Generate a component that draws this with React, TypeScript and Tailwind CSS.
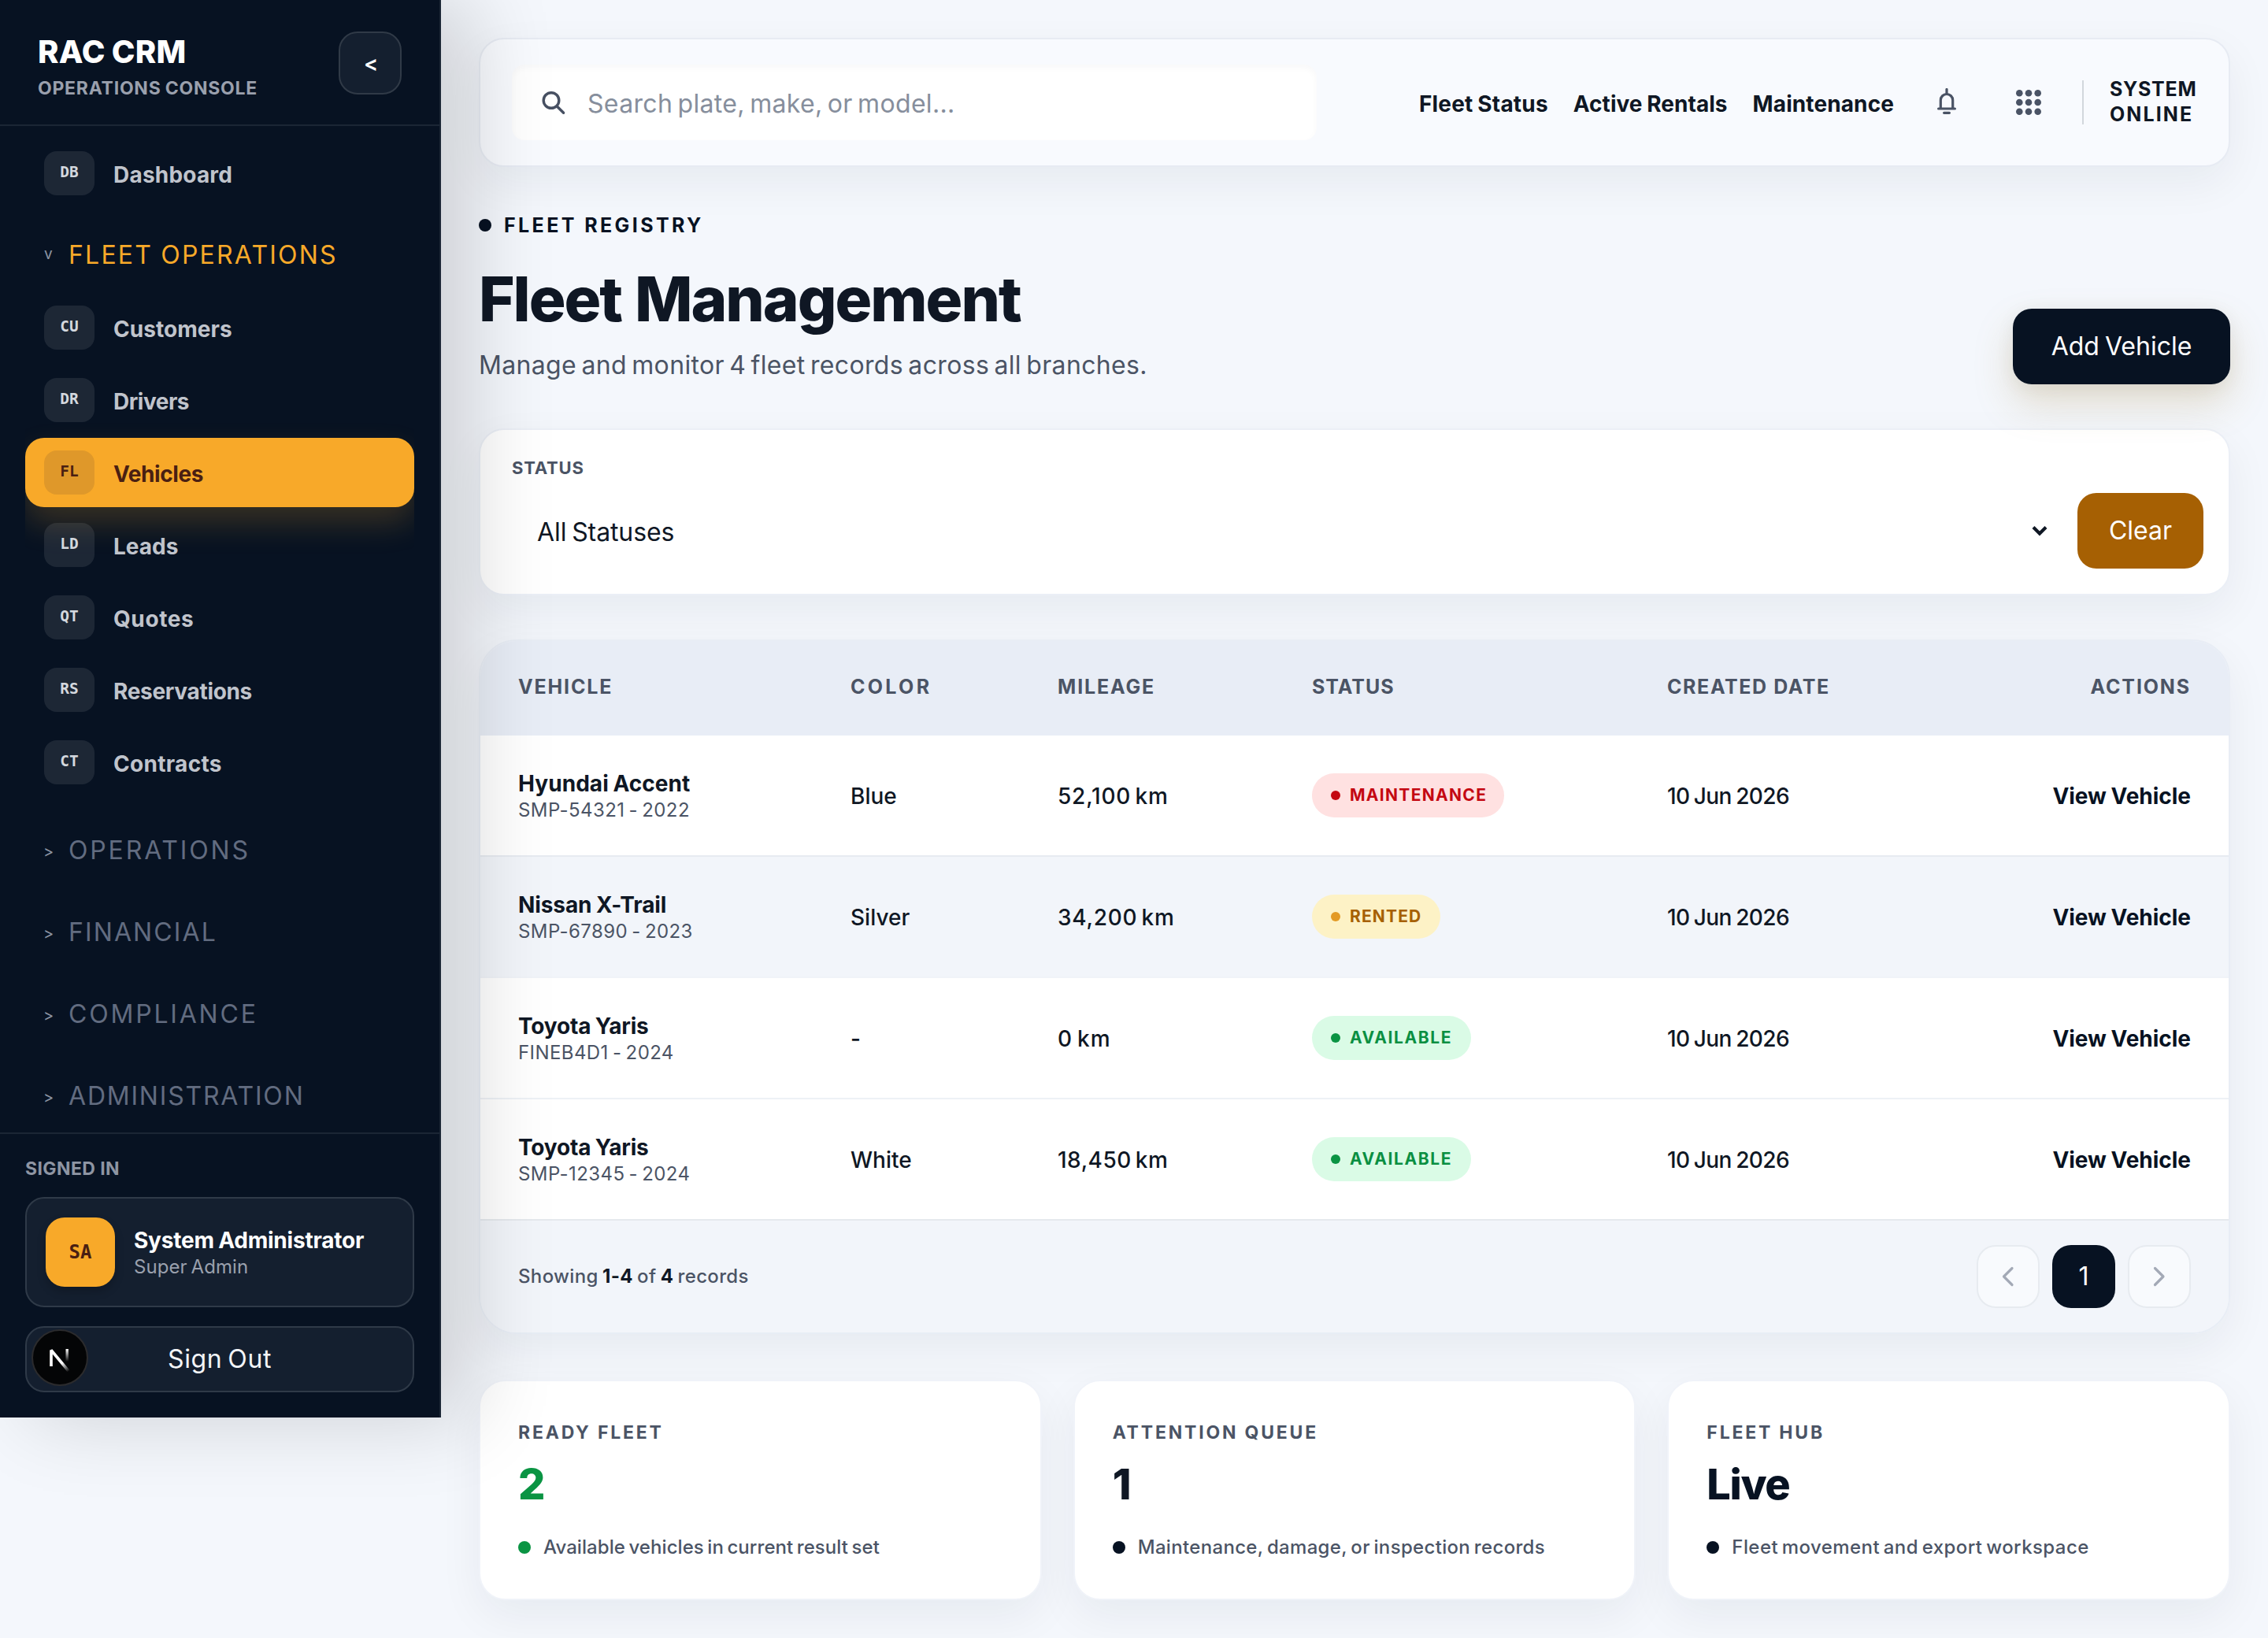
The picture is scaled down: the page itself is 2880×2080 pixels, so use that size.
import React from "react";

type NavEntry = { code: string; label: string; tracking: string; active?: boolean };

const fleetNav: NavEntry[] = [
  { code: "CU", label: "Customers", tracking: "tracking-[0.05px]" },
  { code: "DR", label: "Drivers", tracking: "tracking-[-0.5px]" },
  { code: "FL", label: "Vehicles", tracking: "tracking-[-0.4px]", active: true },
  { code: "LD", label: "Leads", tracking: "tracking-[0px]" },
  { code: "QT", label: "Quotes", tracking: "tracking-[0.6px]" },
  { code: "RS", label: "Reservations", tracking: "tracking-[-0.32px]" },
  { code: "CT", label: "Contracts", tracking: "tracking-[0.3px]" },
];

const closedSections = [
  { label: "OPERATIONS", tracking: "tracking-[2.85px]" },
  { label: "FINANCIAL", tracking: "tracking-[2.1px]" },
  { label: "COMPLIANCE", tracking: "tracking-[2.8px]" },
  { label: "ADMINISTRATION", tracking: "tracking-[1.8px]" },
];

type Tone = "red" | "amber" | "green";

const tones: Record<Tone, { pill: string; dot: string }> = {
  red: { pill: "bg-[#ffe1e1] text-[#c40812] w-[244px] tracking-[1.3px]", dot: "bg-[#c40812]" },
  amber: { pill: "bg-[#fdf2c6] text-[#a66003] w-[163px] tracking-[1.15px]", dot: "bg-[#e39a25]" },
  green: { pill: "bg-[#dafbe6] text-[#0a8f42] w-[202px] tracking-[1.6px]", dot: "bg-[#0a9443]" },
};

const vehicles: {
  name: string; nameTracking: string; plate: string; color: string; mileage: string; mileageTracking: string;
  status: string; tone: Tone; row: string;
}[] = [
  { name: "Hyundai Accent", nameTracking: "tracking-[0.05px]", plate: "SMP-54321 - 2022", color: "Blue", mileage: "52,100 km", mileageTracking: "tracking-[0.8px]", status: "MAINTENANCE", tone: "red", row: "bg-white border-[#e7ebf1]" },
  { name: "Nissan X-Trail", nameTracking: "tracking-[-0.1px]", plate: "SMP-67890 - 2023", color: "Silver", mileage: "34,200 km", mileageTracking: "tracking-[0.75px]", status: "RENTED", tone: "amber", row: "bg-[#f2f5fa] border-[#f0f3f8]" },
  { name: "Toyota Yaris", nameTracking: "tracking-[-0.18px]", plate: "FINEB4D1 - 2024", color: "-", mileage: "0 km", mileageTracking: "tracking-[1.2px]", status: "AVAILABLE", tone: "green", row: "bg-white border-[#eef1f6]" },
  { name: "Toyota Yaris", nameTracking: "tracking-[-0.18px]", plate: "SMP-12345 - 2024", color: "White", mileage: "18,450 km", mileageTracking: "tracking-[0.5px]", status: "AVAILABLE", tone: "green", row: "bg-white border-[#e5e9ee]" },
];

const stats = [
  { label: "READY FLEET", value: "2", note: "Available vehicles in current result set", valueColor: "text-[#0a9443]", dot: "bg-[#0a9443]", noteTracking: "tracking-[0.07px]" },
  { label: "ATTENTION QUEUE", value: "1", note: "Maintenance, damage, or inspection records", valueColor: "text-[#0f1724]", dot: "bg-[#071222]", noteTracking: "tracking-[0.33px]" },
  { label: "FLEET HUB", value: "Live", note: "Fleet movement and export workspace", valueColor: "text-[#071222]", dot: "bg-[#071222]", noteTracking: "tracking-[0.42px]" },
];

const tableCols = "grid grid-cols-[422px_263px_323px_451px_1fr] px-12 items-center";
const cardShadow = "shadow-[0_20px_56px_rgba(15,30,50,0.06)]";

function NavItem({ code, label, tracking, active }: NavEntry) {
  return (
    <div
      className={`flex h-[88px] shrink-0 items-center gap-6 rounded-3xl px-6 ${
        active ? "bg-[#f8a929] shadow-[0_20px_40px_rgba(248,169,41,0.2)]" : ""
      }`}
    >
      <span
        className={`flex h-14 w-16 items-center justify-center rounded-2xl pb-[3px] font-['DejaVu_Sans_Mono',monospace] text-[19.5px] font-bold ${
          active ? "bg-[#df982a] text-[#4a1f12]" : "bg-white/[0.09] text-[#d4d8de]"
        }`}
      >
        {code}
      </span>
      <span className={`pt-[3px] text-[28px] leading-10 font-bold ${tracking} ${active ? "text-[#4a1f12]" : "text-[#c0c4cc]"}`}>
        {label}
      </span>
    </div>
  );
}

function NextMark() {
  return (
    <svg viewBox="0 0 72 72" className="absolute top-0 left-[6px] h-[76px] w-[72px]">
      <defs>
        <linearGradient id="nextDiagonal" x1="40" y1="42" x2="48" y2="53" gradientUnits="userSpaceOnUse">
          <stop stopColor="#fff" />
          <stop offset="1" stopColor="#fff" stopOpacity="0" />
        </linearGradient>
        <linearGradient id="nextStem" x1="45" y1="25" x2="45" y2="41" gradientUnits="userSpaceOnUse">
          <stop stopColor="#fff" />
          <stop offset="1" stopColor="#fff" stopOpacity="0" />
        </linearGradient>
      </defs>
      <circle cx="36" cy="36" r="35" fill="#040506" stroke="#2b2b2d" strokeWidth="2" />
      <path d="M25 47V26.500L47 53" fill="none" stroke="url(#nextDiagonal)" strokeWidth="3.6" strokeLinejoin="bevel" />
      <path d="M45.2 25v16" stroke="url(#nextStem)" strokeWidth="3.4" />
    </svg>
  );
}

function Sidebar() {
  return (
    <aside className="relative z-20 flex h-[1800px] w-[560px] shrink-0 flex-col border-r-2 border-[#1b2635] bg-[#071222] shadow-[40px_0_100px_rgba(0,4,8,0.16)]">
      <div className="flex h-40 shrink-0 items-center justify-between border-b-2 border-[#1b2635] px-12">
        <div className="pt-[11px]">
          <div className="text-[40px] leading-[48px] font-extrabold tracking-[0.2px] text-white [word-spacing:-1px]">RAC CRM</div>
          <div className="mt-[6px] text-[23px] leading-8 font-bold tracking-[0.75px] text-[#9aa0ad] [word-spacing:-1px]">OPERATIONS CONSOLE</div>
        </div>
        <button className="mt-[2px] flex size-20 items-center justify-center rounded-3xl border-2 border-[#303a47] bg-[#141f2f] pt-[3px] pl-[2px] text-[27px] font-semibold text-white">
          &lt;
        </button>
      </div>

      <nav className="mx-8 flex min-h-0 flex-1 flex-col overflow-hidden pt-4">
        <NavItem code="DB" label="Dashboard" tracking="tracking-[0.2px]" />
        <div className="flex h-[108px] shrink-0 items-center pt-3 pl-6">
          <span className="w-[31px] pb-[2px] text-[19px] text-[#8d95a4]">v</span>
          <span className="text-[32px] tracking-[2.2px] text-[#f8a929] [word-spacing:-1px]">FLEET OPERATIONS</span>
        </div>
        <div className="flex shrink-0 flex-col gap-1">
          {fleetNav.map((item) => (
            <NavItem key={item.code} {...item} />
          ))}
        </div>
        <div className="mt-4 flex flex-col">
          {closedSections.map((s) => (
            <div key={s.label} className="flex h-[104px] shrink-0 items-center pl-[23px]">
              <span className="w-8 pt-[2px] text-[20px] text-[#8d95a4]">&gt;</span>
              <span className={`text-[32px] text-[#626c80] ${s.tracking}`}>{s.label}</span>
            </div>
          ))}
        </div>
      </nav>

      <div className="h-[362px] shrink-0 border-t-2 border-[#1b2635] px-8 pt-7">
        <div className="text-[23px] leading-8 font-bold tracking-[0.4px] text-[#8e95a3]">SIGNED IN</div>
        <div className="mt-5 flex h-[140px] items-center gap-6 rounded-3xl border-2 border-[#2f3a48] bg-[#141f2f] px-6">
          <span className="flex size-[88px] items-center justify-center rounded-3xl bg-[#f8a929] font-['DejaVu_Sans_Mono',monospace] text-[24px] font-bold text-[#4a1f12] shadow-[0_6px_12px_rgba(0,0,0,0.2)]">
            SA
          </span>
          <div className="pt-[4px] leading-[34px]">
            <div className="text-[28px] font-bold tracking-[-0.22px] text-white [word-spacing:-1px]">System Administrator</div>
            <div className="text-[24px] tracking-[0.08px] text-[#9aa0ad] [word-spacing:-2px]">Super Admin</div>
          </div>
        </div>
        <div className="relative mt-6 flex h-[84px] items-center justify-center rounded-3xl border-2 border-[#2f3a48] bg-[#141f2f] text-[32px] tracking-[0.6px] text-[#f3f5f8] [word-spacing:-2.5px]">
          <NextMark />
          Sign Out
        </div>
      </div>
    </aside>
  );
}

function TopBar() {
  return (
    <header className={`flex h-[164px] items-center justify-between rounded-[32px] border-2 border-[#e7ebf3] bg-[#f8fafe] px-10 ${cardShadow}`}>
      <div className="flex h-24 w-[1022px] items-center rounded-2xl bg-white pl-[37px] shadow-[inset_0_4px_8px_rgba(15,30,60,0.03)]">
        <svg viewBox="0 0 32 32" className="size-8" fill="none" stroke="#475062" strokeWidth="3.4" strokeLinecap="round">
          <circle cx="13" cy="13.5" r="9.8" />
          <path d="M20.3 21l8.300 8.300" />
        </svg>
        <span className="pt-1 pl-[27px] text-[32px] leading-10 tracking-[0.33px] text-[#868e9c] [word-spacing:-3px]">Search plate, make, or model...</span>
      </div>
      <div className="flex items-center">
        <nav className="flex gap-8 pt-[3px] text-[28px] leading-10 font-bold text-[#0f1724] [word-spacing:-1px]">
          <span className="tracking-[0.19px]">Fleet Status</span>
          <span className="tracking-[0.04px]">Active Rentals</span>
          <span className="tracking-[0.1px]">Maintenance</span>
        </nav>
        <div className="ml-[27px] flex gap-6">
          <span className="flex size-20 items-center justify-center">
            <svg viewBox="0 0 32 36" className="h-9 w-8" fill="none" stroke="#4a5365" strokeWidth="3.2">
              <path d="M16 1.500v5" strokeLinecap="round" />
              <path d="M8.300 26V15.200a7.700 7.700 0 0 1 15.400 0V26" />
              <path d="M5.600 26h20.800" strokeLinecap="round" />
              <path d="M12.600 31.300h6.800" strokeLinecap="round" />
            </svg>
          </span>
          <span className="flex size-20 items-center justify-center">
            <svg viewBox="0 0 32 32" className="size-8" fill="#4a5365">
              {[4.3, 16, 27.7].map((y) => [4.3, 16, 27.7].map((x) => <circle key={`${x}-${y}`} cx={x} cy={y} r="4.3" />))}
            </svg>
          </span>
        </div>
        <span className="ml-7 h-14 w-[2px] bg-[#d2d7dd]" />
        <div className="-mt-[3px] ml-[33px] w-[111px] text-[25px] leading-8 font-bold text-[#0f1724]">
          <div className="tracking-[0.7px]">SYSTEM</div>
          <div className="tracking-[2.1px]">ONLINE</div>
        </div>
      </div>
    </header>
  );
}

function VehicleTable() {
  return (
    <section className={`mt-14 overflow-hidden rounded-[48px] border-2 border-[#e8edf5] ${cardShadow}`}>
      <div className={`${tableCols} h-[120px] bg-[#e8edf6] pb-[3px] text-[25px] font-bold tracking-[1.85px] text-[#4b5465]`}>
        <span>VEHICLE</span>
        <span className="tracking-[3.3px]">COLOR</span>
        <span>MILEAGE</span>
        <span className="tracking-[1px]">STATUS</span>
        <div className="flex justify-between">
          <span className="tracking-[1.6px]">CREATED DATE</span>
          <span>ACTIONS</span>
        </div>
      </div>
      {vehicles.map((v) => (
        <div key={v.plate} className={`${tableCols} h-[154px] border-b-2 text-[28px] font-medium text-[#0f1724] [word-spacing:-3px] ${v.row}`}>
          <div className="pt-1 leading-[34px]">
            <div className={`font-bold [word-spacing:-1px] ${v.nameTracking}`}>{v.name}</div>
            <div className="text-[24px] font-normal tracking-[0.42px] text-[#4b5465] [word-spacing:-2px]">{v.plate}</div>
          </div>
          <span className="pt-[2px]">{v.color}</span>
          <span className={`pt-[2px] ${v.mileageTracking}`}>{v.mileage}</span>
          <div>
            <span className={`flex h-14 items-center gap-3 rounded-full pl-6 text-[21px] font-bold ${tones[v.tone].pill}`}>
              <span className={`size-3 rounded-full ${tones[v.tone].dot}`} />
              {v.status}
            </span>
          </div>
          <div className="flex justify-between pt-[2px]">
            <span className="tracking-[-0.6px] [word-spacing:-1.5px]">10 Jun 2026</span>
            <span className="font-bold tracking-[-0.02px] text-[#071222] [word-spacing:-1px]">View Vehicle</span>
          </div>
        </div>
      ))}
      <div className="flex h-[142px] items-center justify-between bg-[#f2f5fa] px-12">
        <span className="text-[24px] font-medium tracking-[0.35px] text-[#4b5465] [word-spacing:-1.5px]">
          Showing <b className="text-[#0f1724]">1-4</b> of <b className="text-[#0f1724]">4</b> records
        </span>
        <div className="flex gap-4">
          <span className="flex size-20 items-center justify-center rounded-3xl border-2 border-[#e7ebf0] bg-[#f8fafd]">
            <svg viewBox="0 0 32 32" className="size-8" fill="none" stroke="#a3a9b6" strokeWidth="3.2" strokeLinecap="round" strokeLinejoin="round">
              <path d="M21 5.500L10.500 16L21 26.500" />
            </svg>
          </span>
          <span className="flex size-20 items-center justify-center rounded-3xl bg-[#071222] text-[32px] text-white">1</span>
          <span className="flex size-20 items-center justify-center rounded-3xl border-2 border-[#e7ebf0] bg-[#f8fafd]">
            <svg viewBox="0 0 32 32" className="size-8" fill="none" stroke="#a3a9b6" strokeWidth="3.2" strokeLinecap="round" strokeLinejoin="round">
              <path d="M10.500 5.500L21 16L10.500 26.500" />
            </svg>
          </span>
        </div>
      </div>
    </section>
  );
}

export default function App() {
  return (
    <div className="flex h-[2080px] w-[2880px] items-start overflow-hidden bg-[#f4f7fc] font-['Inter',sans-serif] text-[#0f1724]">
      <Sidebar />
      <main className="min-w-0 flex-1 px-12 pt-12">
        <TopBar />

        <div className="relative z-10 mt-[58px] flex items-end justify-between">
          <div className="pb-1">
            <div className="flex items-center gap-4 text-[25px] leading-8 font-bold tracking-[3.4px] text-[#071222]">
              <span className="size-4 rounded-full bg-[#071222]" />
              FLEET REGISTRY
            </div>
            <h1 className="mt-[34px] text-[78px] leading-[88px] font-extrabold tracking-[-2.05px] text-[#0f1724] [word-spacing:2px]">Fleet Management</h1>
            <p className="mt-5 text-[32px] leading-10 tracking-[0.34px] text-[#4b5465] [word-spacing:-3px]">
              Manage and monitor 4 fleet records across all branches.
            </p>
          </div>
          <button className="flex h-24 w-[276px] items-center justify-center rounded-3xl bg-[#071222] text-[32px] tracking-[0px] text-white shadow-[0_24px_50px_rgba(160,125,40,0.22),0_4px_24px_rgba(7,18,34,0.06)] [word-spacing:-2px]">
            Add Vehicle
          </button>
        </div>

        <section className={`mt-14 flex h-[212px] items-start gap-6 rounded-[32px] border-2 border-[#ebeff6] bg-white pr-8 pl-10 ${cardShadow}`}>
          <div className="flex-1 pt-8">
            <div className="text-[22px] leading-8 font-bold tracking-[0.8px] text-[#4b5465]">STATUS</div>
            <div className="mt-4 flex h-24 items-center justify-between pr-3 pl-8 text-[32px] tracking-[-0.1px] [word-spacing:-2px]">
              <span className="pt-1">All Statuses</span>
              <svg viewBox="0 0 24 24" className="size-6" fill="none" stroke="#0f1724" strokeWidth="4.200">
                <path d="M4 7.500L12 15.500L20 7.500" />
              </svg>
            </div>
          </div>
          <button className="mt-20 flex h-24 w-40 items-center justify-center rounded-3xl bg-[#a66003] text-[32px] text-white">Clear</button>
        </section>

        <VehicleTable />

        <div className="mt-[58px] grid grid-cols-3 gap-10">
          {stats.map((s) => (
            <div key={s.label} className={`h-[280px] rounded-[34px] border-2 border-[#f0f3f9] bg-white px-12 pt-[49px] ${cardShadow}`}>
              <div className="text-[23px] leading-8 font-bold tracking-[2.8px] text-[#4b5465]">{s.label}</div>
              <div className={`mt-[18px] text-[54px] leading-[64px] font-extrabold tracking-[-1.38px] ${s.valueColor}`}>{s.value}</div>
              <div className={`mt-8 flex items-center gap-4 text-[24px] leading-8 font-medium whitespace-nowrap text-[#4b5465] [word-spacing:-2px] ${s.noteTracking}`}>
                <span className={`size-4 rounded-full ${s.dot}`} />
                {s.note}
              </div>
            </div>
          ))}
        </div>
      </main>
    </div>
  );
}
